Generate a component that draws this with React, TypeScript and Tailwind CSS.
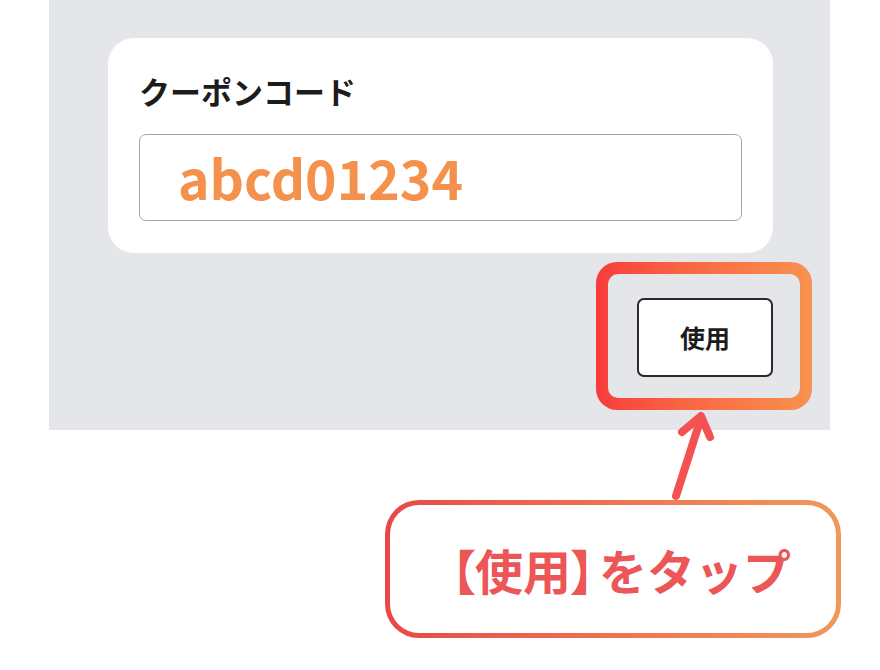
export default function App() {
  const jp = { fontFamily: '"Noto Sans CJK JP", "Noto Sans", sans-serif' }
  return (
    <div className="relative w-[880px] h-[670px] bg-white overflow-hidden" style={jp}>
      <div className="ml-[49px] w-[781px] h-[430px] bg-[#e5e6ea] pt-[38px]">
        <div className="ml-[59px] w-[665px] h-[215px] bg-white rounded-[26px] pt-[31px] px-[31px]">
          <div className="text-[31px] leading-[43px] font-bold text-[#1c1c1c]">クーポンコード</div>
          <div className="mt-[22px] h-[87px] rounded-[7px] border-[1.5px] border-[#a3a3a3] flex items-center pl-[38px]">
            <span className="text-[53.5px] leading-none font-bold text-[#f4924d] pb-[2px]">abcd01234</span>
          </div>
        </div>
        <div className="flex justify-end pr-[18px] mt-[9px]">
          <div className="w-[216px] h-[148px] rounded-[21px] bg-linear-to-r from-[#f73b3b] to-[#f8924f] p-[12px]">
            <div className="w-full h-full rounded-[10px] bg-[#e5e6ea] flex items-center justify-center pt-[3px] pl-[2px]">
              <button className="w-[136px] h-[79px] bg-white border-2 border-[#2a2a2a] rounded-[7px] text-[25px] font-bold text-[#1c1c1c]">
                使用
              </button>
            </div>
          </div>
        </div>
      </div>

      <svg className="absolute left-0 top-0" width="880" height="670" viewBox="0 0 880 670" fill="none">
        <g stroke="#f45252" strokeWidth="8" strokeLinecap="round" strokeLinejoin="round">
          <path d="M676 496 L701 418" />
          <path d="M682 432 L701 416 L710 437" />
        </g>
      </svg>

      <div className="ml-[385px] mt-[70px] w-[456px] h-[138px] rounded-[34px] bg-linear-to-r from-[#e94648] to-[#f0985b] p-[5px]">
        <div className="w-full h-full rounded-[29px] bg-white flex items-center pl-[61px]">
          <span className="text-[48px] font-bold text-[#ec5656] leading-none">
            <span className="[font-feature-settings:'palt']">【使用】</span>
            <span className="ml-[4px]">をタップ</span>
          </span>
        </div>
      </div>
    </div>
  )
}
